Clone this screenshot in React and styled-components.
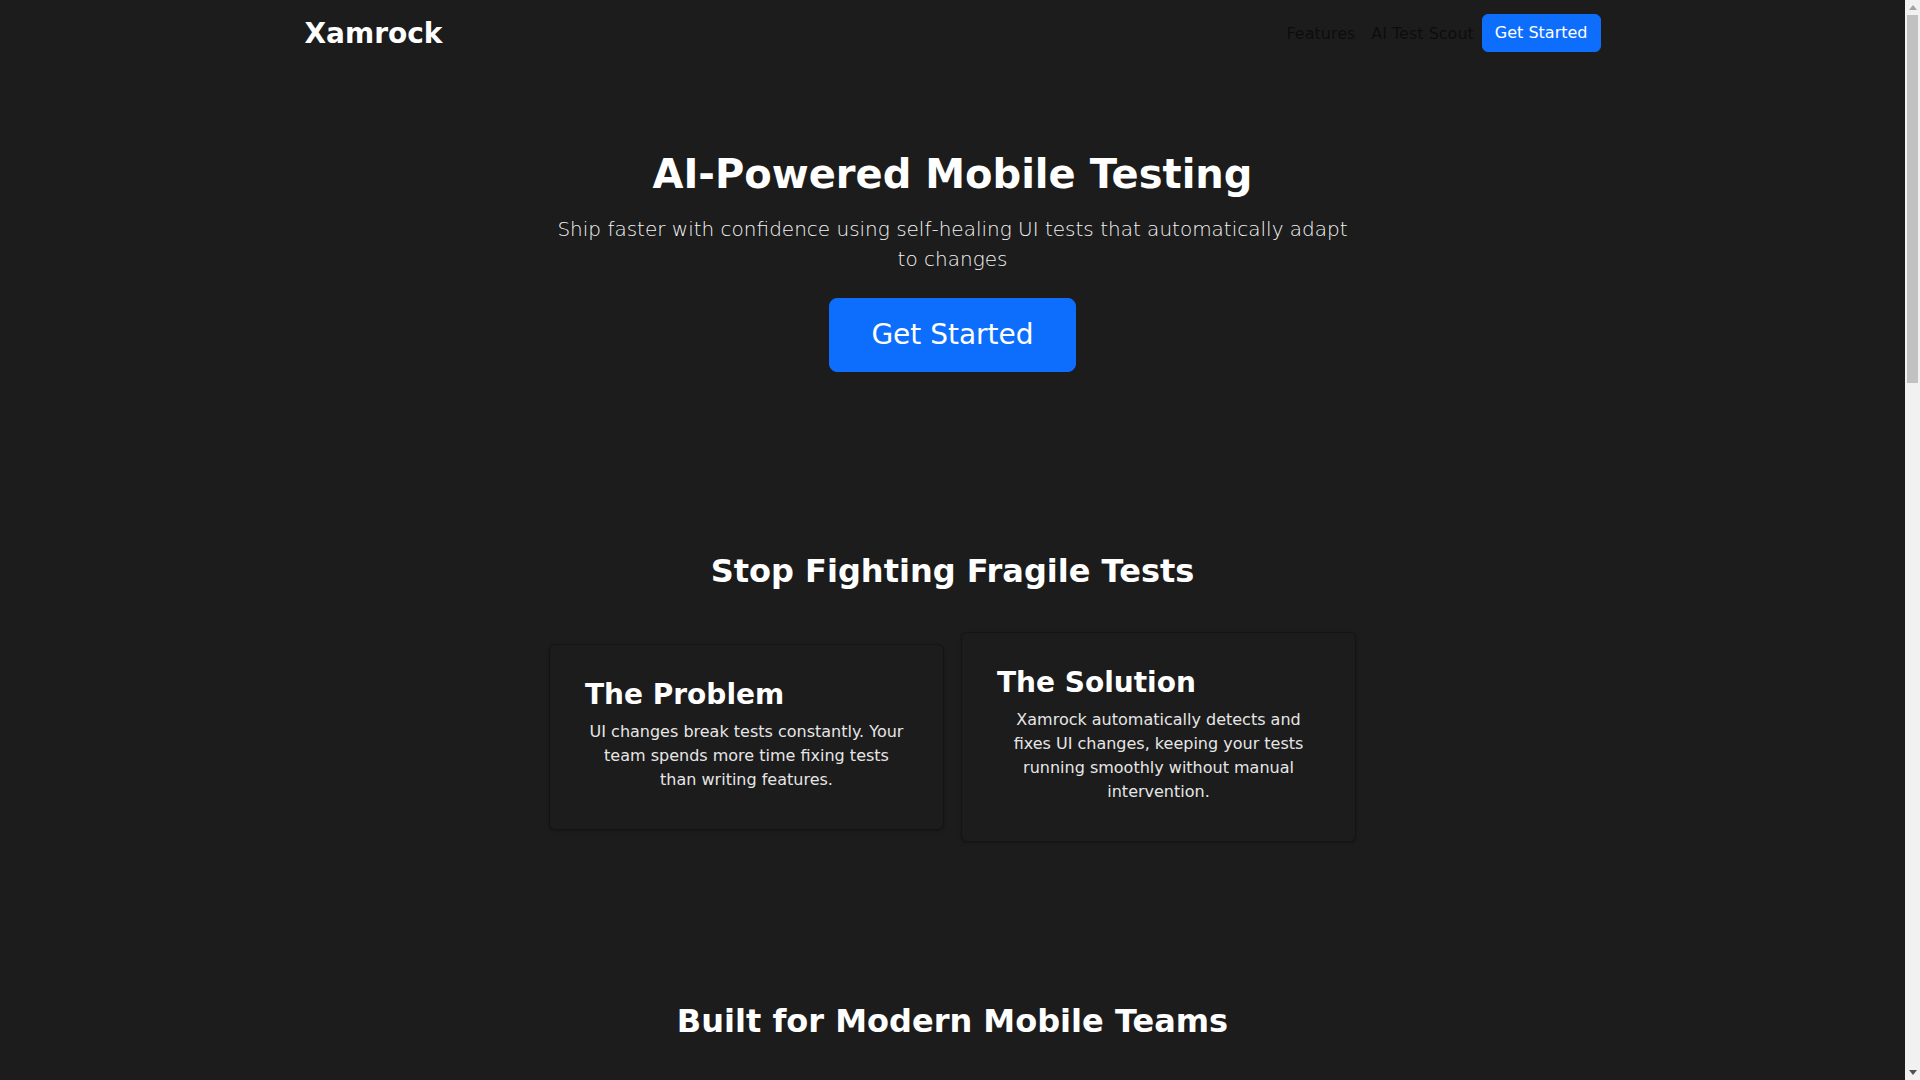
import React from "react";
import styled, { createGlobalStyle } from "styled-components";

const Global = createGlobalStyle`
  *, *::before, *::after { box-sizing: border-box; }
  html, body { margin: 0; padding: 0; }
  body {
    background: #1c1c1c;
    color: #dee2e6;
    font-family: "DejaVu Sans", "Liberation Sans", sans-serif;
    font-size: 16px;
    line-height: 1.5;
  }
`;

/* Page column leaves room for the classic scrollbar shown in the reference */
const Page = styled.div`
  padding-right: 15px;
`;

const ScrollTrack = styled.div`
  position: fixed;
  top: 0;
  right: 0;
  width: 15px;
  height: 100vh;
  background: #f1f1f1;
  display: flex;
  flex-direction: column;
  align-items: center;
  z-index: 10;
`;

const ScrollArrow = styled.div`
  width: 15px;
  height: 15px;
  display: flex;
  align-items: center;
  justify-content: center;
  flex: none;
  margin-top: ${(p) => (p.$down ? "auto" : "0")};
`;

const ScrollThumb = styled.div`
  width: 11px;
  height: 368px;
  background: #c1c1c1;
  flex: none;
`;

const Container = styled.div`
  width: 1320px;
  max-width: 100%;
  margin: 0 auto;
  padding: 0 12px;
`;

const Navbar = styled.nav`
  padding: 14px 0;
`;

const NavInner = styled(Container)`
  display: flex;
  align-items: center;
  justify-content: space-between;
  height: 38px;
`;

const Brand = styled.a`
  font-size: 28px;
  font-weight: 700;
  color: #ffffff;
  text-decoration: none;
  line-height: 1.2;
  margin-top: 2px;
`;

const NavLinks = styled.div`
  display: flex;
  align-items: center;
`;

const NavLink = styled.a`
  padding: 9px 8px 7px;
  color: rgba(0, 0, 0, 0.55);
  text-decoration: none;
  font-size: 16px;
`;

const Button = styled.a`
  display: inline-block;
  background: #0d6efd;
  border: 1px solid #0d6efd;
  color: #ffffff;
  text-decoration: none;
  border-radius: ${(p) => (p.$large ? "8px" : "6px")};
  font-size: ${(p) => (p.$large ? "28px" : "16px")};
  line-height: 1.5;
  padding: ${(p) => (p.$large ? "15px 41px" : "6px 12px")};
`;

const Hero = styled.section`
  padding: 84px 0 90px;
  text-align: center;
`;

const HeroTitle = styled.h1`
  margin: 0 0 16px;
  font-size: 40px;
  font-weight: 700;
  line-height: 1.2;
  color: #ffffff;
`;

const Lead = styled.p`
  max-width: 800px;
  margin: 0 auto 24px;
  font-size: 20px;
  font-weight: 300;
  line-height: 1.5;
  color: #f4f4f4;
`;

const Section = styled.section`
  padding: ${(p) => p.$pad || "80px 0"};
`;

const SectionTitle = styled.h2`
  margin: 0 0 42px;
  text-align: center;
  font-size: 32px;
  font-weight: 700;
  line-height: 1.2;
  color: #ffffff;
`;

const CardRow = styled.div`
  display: grid;
  grid-template-columns: repeat(${(p) => p.$cols || 2}, 1fr);
  gap: ${(p) => (p.$cols === 3 ? "24px" : "17px")};
  max-width: ${(p) => p.$max || "807px"};
  margin: 0 auto;
  align-items: center;
`;

const Card = styled.div`
  border: 1px solid #141414;
  border-radius: 6px;
  background: #1c1c1c;
  box-shadow: 0 1px 3px rgba(0, 0, 0, 0.25);
  padding: 33px 35px 37px;
`;

const CardTitle = styled.h3`
  margin: 0 0 8px;
  font-size: 28px;
  font-weight: 700;
  line-height: 1.2;
  color: #ffffff;
`;

const CardText = styled.p`
  margin: 0;
  padding: 0 2px;
  text-align: center;
  color: #e6e6e6;
`;

const FeatureTitle = styled.h4`
  margin: 0 0 8px;
  font-size: 22px;
  font-weight: 700;
  line-height: 1.2;
  color: #ffffff;
`;

const Footer = styled.footer`
  padding: 40px 0 60px;
  text-align: center;
  color: #9a9a9a;
  font-size: 14px;
`;

const CtaWrap = styled.div`
  text-align: center;
`;

const features = [
  ["Self-Healing Tests", "Tests adapt automatically when your UI changes, so you spend less time on maintenance."],
  ["AI Test Scout", "Let AI explore your app and generate meaningful test cases for every screen."],
  ["iOS & Android", "One platform for both native platforms, with consistent results everywhere."],
  ["CI/CD Integration", "Plug into your existing pipeline and get feedback on every pull request."],
  ["Detailed Reports", "Screenshots, logs and step-by-step results for every test run."],
  ["Fast Setup", "Get your first tests running in minutes, not weeks."],
];

const steps = [
  ["1. Connect", "Link your iOS or Android app build and your existing test suite in a few clicks."],
  ["2. Record", "Capture user flows or let AI Test Scout discover them for you automatically."],
  ["3. Relax", "When the UI changes, Xamrock heals your tests so your pipeline stays green."],
];

function Scrollbar() {
  return (
    <ScrollTrack aria-hidden="true">
      <ScrollArrow>
        <svg width="8" height="5" viewBox="0 0 8 5">
          <polygon points="0,5 8,5 4,0" fill="#a3a3a3" />
        </svg>
      </ScrollArrow>
      <ScrollThumb />
      <ScrollArrow $down>
        <svg width="8" height="5" viewBox="0 0 8 5">
          <polygon points="0,0 8,0 4,5" fill="#505050" />
        </svg>
      </ScrollArrow>
    </ScrollTrack>
  );
}

export default function App() {
  return (
    <Page>
      <Global />
      <Scrollbar />
      <Navbar>
        <NavInner>
          <Brand href="#">Xamrock</Brand>
          <NavLinks>
            <NavLink href="#">Features</NavLink>
            <NavLink href="#">AI Test Scout</NavLink>
            <Button href="#">Get Started</Button>
          </NavLinks>
        </NavInner>
      </Navbar>

      <Hero>
        <Container>
          <HeroTitle>AI-Powered Mobile Testing</HeroTitle>
          <Lead>
            Ship faster with confidence using self-healing UI tests that automatically adapt to changes
          </Lead>
          <Button $large href="#">Get Started</Button>
        </Container>
      </Hero>

      <Section $pad="90px 0 80px">
        <Container>
          <SectionTitle>Stop Fighting Fragile Tests</SectionTitle>
          <CardRow>
            <Card>
              <CardTitle>The Problem</CardTitle>
              <CardText>
                UI changes break tests constantly. Your team spends more time fixing tests than writing features.
              </CardText>
            </Card>
            <Card>
              <CardTitle>The Solution</CardTitle>
              <CardText>
                Xamrock automatically detects and fixes UI changes, keeping your tests running smoothly without manual intervention.
              </CardText>
            </Card>
          </CardRow>
        </Container>
      </Section>

      <Section>
        <Container>
          <SectionTitle>Built for Modern Mobile Teams</SectionTitle>
          <CardRow $cols={3} $max="1100px">
            {features.map(([t, d]) => (
              <Card key={t}>
                <FeatureTitle>{t}</FeatureTitle>
                <CardText>{d}</CardText>
              </Card>
            ))}
          </CardRow>
        </Container>
      </Section>

      <Section>
        <Container>
          <SectionTitle>How It Works</SectionTitle>
          <CardRow $cols={3} $max="1100px">
            {steps.map(([t, d]) => (
              <Card key={t}>
                <FeatureTitle>{t}</FeatureTitle>
                <CardText>{d}</CardText>
              </Card>
            ))}
          </CardRow>
        </Container>
      </Section>

      <Section>
        <Container>
          <SectionTitle>Meet AI Test Scout</SectionTitle>
          <CardRow>
            <Card>
              <CardTitle>Explore</CardTitle>
              <CardText>
                AI Test Scout navigates your app like a real user, discovering screens and flows automatically.
              </CardText>
            </Card>
            <Card>
              <CardTitle>Generate</CardTitle>
              <CardText>
                It turns what it finds into robust, readable tests that your team can review and extend.
              </CardText>
            </Card>
          </CardRow>
        </Container>
      </Section>

      <Section $pad="80px 0 120px">
        <Container>
          <CtaWrap>
            <SectionTitle>Ready to Ship Faster?</SectionTitle>
            <Lead>Join mobile teams who trust Xamrock to keep their tests green.</Lead>
            <Button $large href="#">Get Started</Button>
          </CtaWrap>
        </Container>
      </Section>

      <Footer>© 2024 Xamrock. All rights reserved.</Footer>
    </Page>
  );
}
